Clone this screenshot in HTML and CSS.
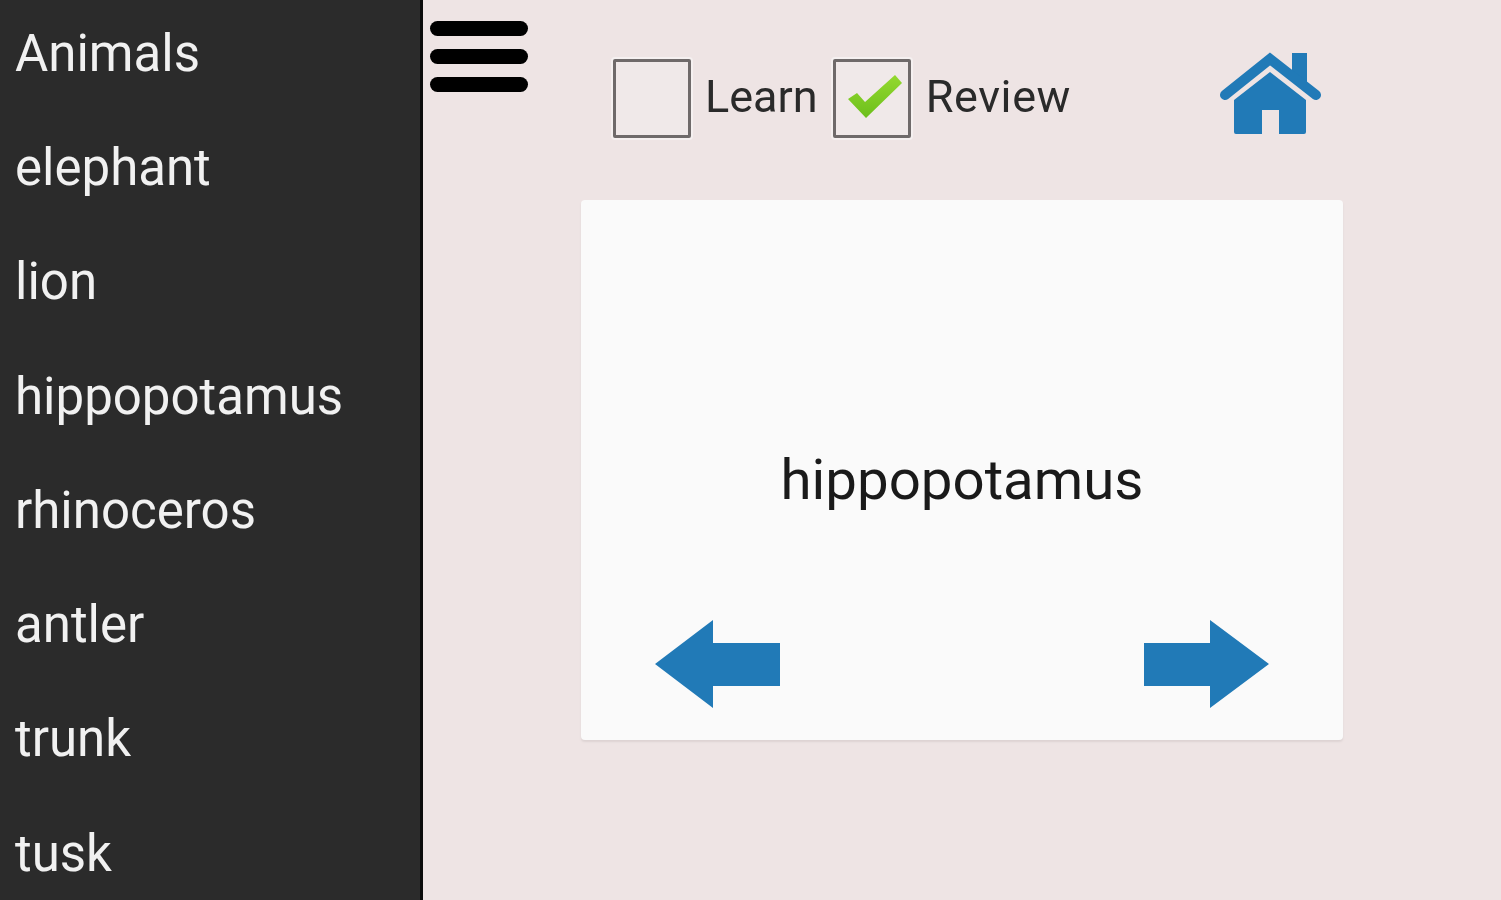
FILE: index.html
```html
<!DOCTYPE html>
<html lang="en">
<head>
<meta charset="utf-8">
<title>Animals</title>
<link rel="stylesheet" href="styles.css">
</head>
<body>
<div class="app">
  <nav class="drawer">
    <div class="item">Animals</div>
    <div class="item">elephant</div>
    <div class="item">lion</div>
    <div class="item">hippopotamus</div>
    <div class="item">rhinoceros</div>
    <div class="item">antler</div>
    <div class="item">trunk</div>
    <div class="item">tusk</div>
  </nav>
  <main class="main">
    <div class="menu"><span></span><span></span><span></span></div>
    <div class="content">
      <div class="toolbar">
        <span class="check"></span>
        <span class="label learn">Learn</span>
        <span class="check">
          <svg class="tick" viewBox="0 0 54 43" width="54" height="43">
            <defs><linearGradient id="tickFill" x1="0" y1="0" x2="0" y2="1"><stop offset="0" stop-color="#94d92f"/><stop offset="1" stop-color="#6cbf1c"/></linearGradient></defs>
            <path d="M0 24 L9 18 L17 27 L47 0 L54 8 L18 43 Z" fill="url(#tickFill)"/>
          </svg>
        </span>
        <span class="label review">Review</span>
        <svg class="home" viewBox="0 0 101 83" width="101" height="83">
          <path d="M72 1 H87 V30 H72 Z" fill="#217ab7"/>
          <path d="M5 43 L50 7 L96 43" fill="none" stroke="#217ab7" stroke-width="10" stroke-linecap="round"/>
          <path d="M50 20 L86 48 V80 Q86 82 84 82 H59 V58 H42 V82 H16 Q14 82 14 80 V48 Z" fill="#217ab7"/>
        </svg>
      </div>
      <section class="card">
        <div class="word">hippopotamus</div>
        <div class="arrows">
          <svg viewBox="0 0 126 88" width="126" height="88"><path d="M0 44 L58 0 V23 H125 V66 H58 V88 Z" fill="#217ab7"/></svg>
          <svg viewBox="0 0 126 88" width="126" height="88"><path d="M125 44 L66 0 V23 H0 V66 H66 V88 Z" fill="#217ab7"/></svg>
        </div>
      </section>
    </div>
  </main>
</div>
</body>
</html>
```
FILE: styles.css
```css
* { box-sizing: border-box; }
html, body { margin: 0; height: 100%; overflow: hidden; }
body { font-family: Roboto, "Liberation Sans", sans-serif; background: #eee4e4; }
.app { display: flex; height: 900px; width: 1501px; filter: blur(0.55px); }
.drawer { width: 423px; flex: none; background: #2b2b2b; border-right: 3px solid #0c0c0c; }
.item { height: 114.3px; display: flex; align-items: center; padding: 0 0 0 15px; font-size: 51px; color: #f1f1f1; line-height: 1; transform: translateY(-4px); }
.main { flex: 1; display: flex; align-items: flex-start; }
.menu { flex: none; width: 98px; margin: 21px 0 0 7px; display: flex; flex-direction: column; gap: 13px; }
.menu span { display: block; height: 15px; background: #000; border-radius: 8px; }
.content { flex: none; width: 762px; margin-left: 53px; }
.toolbar { height: 200px; display: flex; align-items: flex-start; padding: 59px 0 0 32px; position: relative; }
.check { width: 78px; height: 79px; border: 3px solid #6f6a6a; box-shadow: 0 0 0 2px #f5f0f0; background: #f0e9e9; display: flex; align-items: center; justify-content: center; flex: none; border-radius: 2px; }
.tick { flex: none; margin: 0 0 5px 6px; }
.label { font-size: 45px; line-height: 76px; color: #2a2a2a; margin-left: 14px; }
.learn { margin-right: 15px; }
.review { letter-spacing: 0.6px; margin-left: 15px; }
.home { position: absolute; left: 639px; top: 52px; }
.card { height: 540px; background: #fafafa; border-radius: 4px; box-shadow: 0 2px 2px #ddd3d3; display: flex; flex-direction: column; }
.word { text-align: center; font-size: 56.4px; line-height: 60px; color: #1a1a1a; margin-top: 250px; }
.arrows { display: flex; justify-content: space-between; padding: 110px 73px 0 74px; }
```
